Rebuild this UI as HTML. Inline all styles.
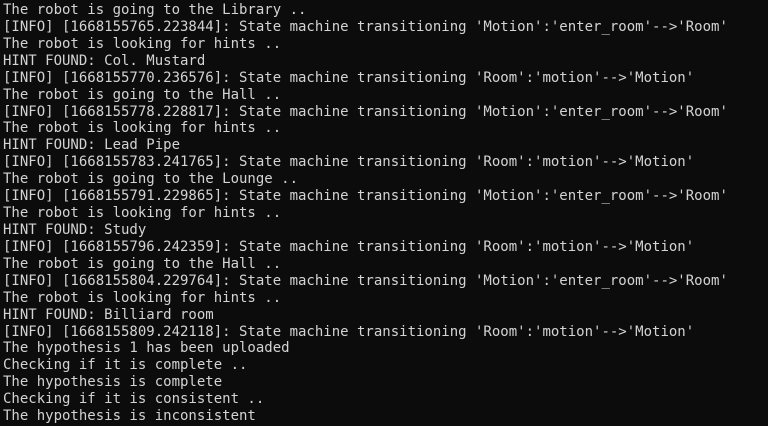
<!DOCTYPE html>
<html><head><style>
html,body{margin:0;padding:0;background:#0c0c0c;width:768px;height:426px;overflow:hidden}
pre{margin:0;padding:2px 0 0 3px;font-family:"DejaVu Sans Mono","Liberation Mono",monospace;font-size:14px;line-height:16.92px;color:#d3d3d3}
</style></head><body><pre>The robot is going to the Library ..
[INFO] [1668155765.223844]: State machine transitioning 'Motion':'enter_room'-->'Room'
The robot is looking for hints ..
HINT FOUND: Col. Mustard
[INFO] [1668155770.236576]: State machine transitioning 'Room':'motion'-->'Motion'
The robot is going to the Hall ..
[INFO] [1668155778.228817]: State machine transitioning 'Motion':'enter_room'-->'Room'
The robot is looking for hints ..
HINT FOUND: Lead Pipe
[INFO] [1668155783.241765]: State machine transitioning 'Room':'motion'-->'Motion'
The robot is going to the Lounge ..
[INFO] [1668155791.229865]: State machine transitioning 'Motion':'enter_room'-->'Room'
The robot is looking for hints ..
HINT FOUND: Study
[INFO] [1668155796.242359]: State machine transitioning 'Room':'motion'-->'Motion'
The robot is going to the Hall ..
[INFO] [1668155804.229764]: State machine transitioning 'Motion':'enter_room'-->'Room'
The robot is looking for hints ..
HINT FOUND: Billiard room
[INFO] [1668155809.242118]: State machine transitioning 'Room':'motion'-->'Motion'
The hypothesis 1 has been uploaded
Checking if it is complete ..
The hypothesis is complete
Checking if it is consistent ..
The hypothesis is inconsistent</pre></body></html>
